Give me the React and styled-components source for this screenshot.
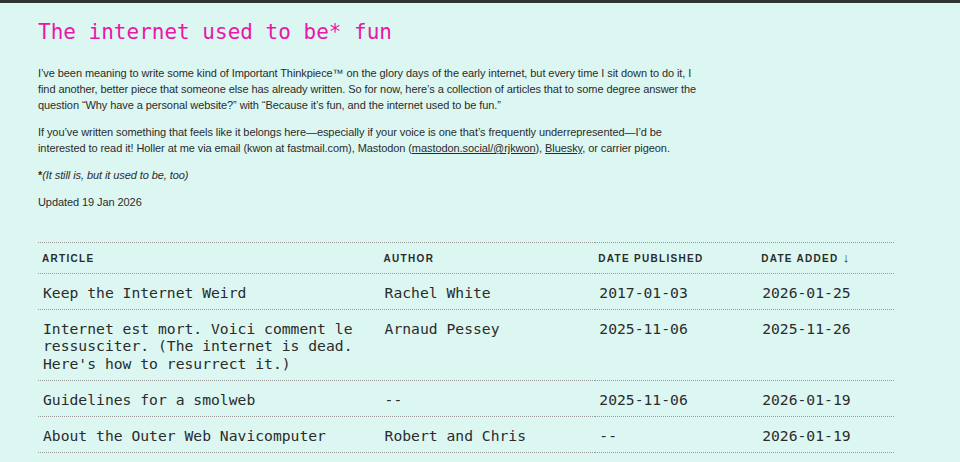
import React from 'react';
import styled, { createGlobalStyle } from 'styled-components';

const GlobalStyle = createGlobalStyle`
  html, body {
    margin: 0;
    padding: 0;
    background: #dcf7f2;
  }
  body {
    font-family: "Liberation Sans", Arial, sans-serif;
    color: #2b2b2b;
  }
`;

// Page wrapper with the dark strip along the top
const Page = styled.div`
  min-height: 100vh;
  border-top: 3px solid #333;
  padding: 0 38px 40px 38px;
  box-sizing: border-box;
`;

const Title = styled.h1`
  font-family: "DejaVu Sans Mono", monospace;
  font-weight: normal;
  font-size: 21px;
  line-height: 26px;
  color: #ea16a9;
  margin: 16px 0 20px 0;
`;

const Para = styled.p`
  max-width: 662px;
  font-size: 11px;
  line-height: 16px;
  letter-spacing: -0.08px;
  margin: 0 0 11px 0;
  font-style: ${(props) => (props.italic ? 'italic' : 'normal')};
`;

const Link = styled.a`
  color: inherit;
  text-decoration: underline;
`;

const Star = styled.span`
  font-style: normal;
  font-weight: bold;
`;

const Table = styled.table`
  width: 858px;
  margin-top: 32px;
  margin-left: -1px;
  border-collapse: separate;
  border-spacing: 1px 0;
`;

const HeadCell = styled.th`
  text-align: left;
  font-family: "Liberation Sans", Arial, sans-serif;
  font-size: 10px;
  font-weight: bold;
  letter-spacing: 1.3px;
  text-transform: uppercase;
  color: #2b2b2b;
  padding: 9px 4px 8px 4px;
  line-height: 12px;
  border-top: 1px dotted #9a9a9a;
  border-bottom: 1px dotted #9a9a9a;
`;

const SortArrow = styled.span`
  font-size: 13px;
  font-weight: normal;
  letter-spacing: 0;
`;

const Cell = styled.td`
  font-family: "DejaVu Sans Mono", monospace;
  font-size: 14.7px;
  line-height: 17.5px;
  color: #2b2b2b;
  vertical-align: top;
  padding: 9.5px 4px 8px 5px;
  border-bottom: 1px dotted #9a9a9a;
`;

const articles = [
  {
    title: 'Keep the Internet Weird',
    author: 'Rachel White',
    published: '2017-01-03',
    added: '2026-01-25',
  },
  {
    title:
      "Internet est mort. Voici comment le ressusciter. (The internet is dead. Here's how to resurrect it.)",
    author: 'Arnaud Pessey',
    published: '2025-11-06',
    added: '2025-11-26',
  },
  {
    title: 'Guidelines for a smolweb',
    author: '--',
    published: '2025-11-06',
    added: '2026-01-19',
  },
  {
    title: 'About the Outer Web Navicomputer',
    author: 'Robert and Chris',
    published: '--',
    added: '2026-01-19',
  },
];

const App = () => (
  <>
    <GlobalStyle />
    <Page>
      <Title>The internet used to be* fun</Title>
      <Para>
        I’ve been meaning to write some kind of Important Thinkpiece™ on the glory days of the
        early internet, but every time I sit down to do it, I find another, better piece that
        someone else has already written. So for now, here’s a collection of articles that to
        some degree answer the question “Why have a personal website?” with “Because it’s fun,
        and the internet used to be fun.”
      </Para>
      <Para>
        If you’ve written something that feels like it belongs here—especially if your voice is
        one that’s frequently underrepresented—I’d be interested to read it! Holler at me via
        email (kwon at fastmail.com), Mastodon (<Link href="#">mastodon.social/@rjkwon</Link>),{' '}
        <Link href="#">Bluesky</Link>, or carrier pigeon.
      </Para>
      <Para italic>
        <Star>*</Star>(It still is, but it used to be, too)
      </Para>
      <Para>Updated 19 Jan 2026</Para>

      <Table>
        <colgroup>
          <col style={{ width: 341 }} />
          <col style={{ width: 214 }} />
          <col style={{ width: 162 }} />
          <col style={{ width: 137 }} />
        </colgroup>
        <thead>
          <tr>
            <HeadCell>Article</HeadCell>
            <HeadCell>Author</HeadCell>
            <HeadCell>Date published</HeadCell>
            <HeadCell>
              Date added <SortArrow>↓</SortArrow>
            </HeadCell>
          </tr>
        </thead>
        <tbody>
          {articles.map((a) => (
            <tr key={a.title}>
              <Cell>{a.title}</Cell>
              <Cell>{a.author}</Cell>
              <Cell>{a.published}</Cell>
              <Cell>{a.added}</Cell>
            </tr>
          ))}
        </tbody>
      </Table>
    </Page>
  </>
);

export default App;
